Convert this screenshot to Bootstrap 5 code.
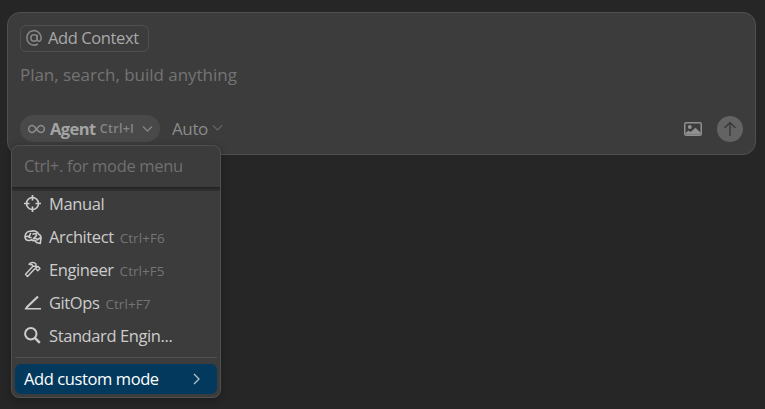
<!DOCTYPE html>
<html lang="en" data-bs-theme="dark">
<head>
<meta charset="utf-8">
<meta name="viewport" content="width=device-width, initial-scale=1">
<title>Agent composer</title>
<link rel="stylesheet" href="https://cdn.jsdelivr.net/npm/bootstrap@5.3.0/dist/css/bootstrap.min.css">
<style>
body{background:#262626;font-family:"Open Sans","Noto Sans",sans-serif;font-size:17px;line-height:24px;color:#ccc;overflow:hidden;height:409px}
svg{display:block;flex:none;fill:none;stroke:currentColor}
.composer{margin:12px 9px 0 7px;height:143px;background:#3c3c3c;border:1px solid #505050;border-radius:13px;padding:12px}
.context-btn{height:27px;width:129px;border:1px solid #505050;border-radius:6px;color:#a9a9a9;padding:0 0 1px 4px;font-size:16.5px;letter-spacing:-.4px;line-height:24px;background:none}
.context-btn svg{color:#858585;margin-right:5px}
.prompt{margin-top:11px;color:#747474;letter-spacing:-.03px}
.tools{margin-top:28px;height:27px}
.mode-btn{width:140px;height:27px;border-radius:14px;background:#494949;color:#a4a4a4;padding:0 7px 0 8px;border:0}
.mode-btn b{font-weight:700;font-size:16.5px;letter-spacing:-.55px;margin-left:5px}
.mode-btn small{font-size:12.5px;font-weight:600;color:#858585;margin-left:4px;letter-spacing:.3px;line-height:26px;padding-top:1px}
.mode-btn .caret{color:#858585}
.auto-btn{color:#8b8b8b;margin-left:12px;padding:0;border:0;background:none;letter-spacing:-.4px;line-height:27px}
.auto-btn svg{color:#646464;margin-top:-2px}
.send{width:26px;height:26px;background:#636363;color:#383838;margin-left:15px}
.mode-menu{position:absolute;left:11px;top:145px;width:210px;height:253px;background:#3c3c3c;border:1px solid #505050;border-radius:8px;box-shadow:0 2px 8px rgba(0,0,0,.28);overflow:hidden;font-size:16.5px}
.menu-search{height:41px;padding:8px 12px;color:#707070;letter-spacing:-.33px}
.scroll-shade{height:4px;background:linear-gradient(#202020,#2b2b2b 45%,#303030)}
.mode-list{height:170px;margin-top:-4px}
.mode-item{height:33px;padding:0 12px;color:#ccc;letter-spacing:-.4px}
.mode-item svg{margin-right:8px}
.mode-item .key{font-size:13.5px;color:#747474;margin-left:6px;padding-top:2px;letter-spacing:.05px}
.rule{height:1px;background:#505050;margin:0 3px}
.custom-item{height:30px;margin:6px 3px 0;border-radius:6px;background:#04395e;color:#fff;padding:0 15px 0 9px;letter-spacing:-.4px}
</style>
</head>
<body>
<main class="composer">
  <button class="context-btn d-flex align-items-center text-nowrap"><svg width="18" height="18" viewBox="0 0 18 18" stroke-width="1.6"><circle cx="9" cy="9" r="3.2"/><path d="M12.2 5.8v4.5c0 3 4 2.5 4-1.5A7.2 7.2 0 1 0 12.8 15"/></svg><span>Add Context</span></button>
  <div class="prompt text-nowrap">Plan, search, build anything</div>
  <div class="tools d-flex align-items-center">
    <button class="mode-btn d-flex align-items-center text-nowrap"><svg width="17" height="10" viewBox="0 0 17 10" stroke-width="1.5" color="#8c8c8c"><path d="M8.5 5C6.8 2.7 5.8 1.5 4.2 1.5a3.5 3.5 0 0 0 0 7C5.8 8.5 6.8 7.3 8.5 5s2.700-3.500 4.300-3.500a3.500 3.500 0 0 1 0 7C11.200 8.500 10.200 7.300 8.500 5"/></svg><b>Agent</b><small>Ctrl+I</small><svg class="caret ms-auto" width="11" height="8" viewBox="0 0 11 8" stroke-width="1.3"><path d="m1 1.500 4.500 4.500L10 1.500"/></svg></button>
    <button class="auto-btn d-flex align-items-center text-nowrap"><span>Auto</span><svg class="ms-1" width="11" height="8" viewBox="0 0 11 8" stroke-width="1.2"><path d="m1 1.500 4.500 4.500L10 1.500"/></svg></button>
    <svg class="ms-auto" width="18" height="14" viewBox="0 0 18 14" color="#909090"><rect x=".75" y=".75" width="16.500" height="12.500" rx="1.500" stroke-width="1.500"/><circle cx="5.800" cy="5" r="2" fill="currentColor" stroke="none"/><path d="M1.500 12.500V11l3-2.500 2 1.500 5-4.200 5 4.700v2z" fill="currentColor" stroke="none"/></svg>
    <div class="send rounded-circle d-flex align-items-center justify-content-center"><svg width="14" height="16" viewBox="0 0 14 16" stroke-width="1.400"><path d="M7 15V1.500M1.500 7 7 1.500 12.500 7"/></svg></div>
  </div>
</main>
<div class="mode-menu text-nowrap">
  <div class="menu-search">Ctrl+. for mode menu</div>
  <div class="scroll-shade"></div>
  <div class="mode-list">
    <div class="mode-item d-flex align-items-center"><svg width="17" height="17" viewBox="0 0 17 17" stroke-width="1.700"><circle cx="8.500" cy="8.500" r="6"/><path d="M8.500 0v5.500M8.500 11.500V17M0 8.500h5.500M11.500 8.500H17"/></svg><span>Manual</span></div>
    <div class="mode-item d-flex align-items-center"><svg class="me-2" width="18" height="17" viewBox="0 0 18 17" stroke-width="1.600" stroke-linejoin="round" stroke-linecap="round"><path d="M5.500 12.500C2.500 13 .5 10.500 1.200 8 1.500 5 4 3 7 3.200c3-1 6.500.3 7.500 2.800 2 1 3 3 2.300 5.500L16.300 15.500l-3.800-1-1.500-2c-2 .5-3-.3-3.500-1-.5.8-1 1-2 1M2.500 8.500 5.500 8 6.500 5.500M5 9.500h2M9 6l3-.5.5 2L9.500 10.500h3M13 12l3-2"/></svg><span style="margin-left:-1px">Architect</span><span class="key">Ctrl+F6</span></div>
    <div class="mode-item d-flex align-items-center"><svg width="17" height="17" viewBox="0 0 17 17" stroke-width="1.400" stroke-linejoin="round"><path d="M5 3.200C7 1 10 .8 12 3v2l1.200 1 1-.5 1.800 2-2.200 2.200-2-2 .5-1L11 5.200H9.200L8 3.700 5 3.200zM8.700 5.500 1.500 13.200 3.500 15.500 11 7.500"/></svg><span>Engineer</span><span class="key">Ctrl+F5</span></div>
    <div class="mode-item d-flex align-items-center"><svg width="17" height="17" viewBox="0 0 17 17"><path d="M3 13 14 2.500" stroke-width="2.200"/><path d="M.5 15.300l2-3.300 2 2z" fill="currentColor" stroke="none"/><path d="M1 14.800h16" stroke-width="1.600"/></svg><span>GitOps</span><span class="key">Ctrl+F7</span></div>
    <div class="mode-item d-flex align-items-center"><svg width="17" height="17" viewBox="0 0 17 17" stroke-width="2"><circle cx="6.800" cy="6.800" r="5.700"/><path d="m10.800 10.800 5 5" stroke-width="2.500"/></svg><span>Standard Engin...</span></div>
  </div>
  <div class="rule"></div>
  <div class="custom-item d-flex align-items-center"><span>Add custom mode</span><svg class="ms-auto" width="10" height="14" viewBox="0 0 10 14" stroke-width="1.300" color="#b4c4cf"><path d="m2 2 5 5-5 5"/></svg></div>
</div>
<script src="https://cdn.jsdelivr.net/npm/bootstrap@5.3.0/dist/js/bootstrap.bundle.min.js"></script>
</body>
</html>
